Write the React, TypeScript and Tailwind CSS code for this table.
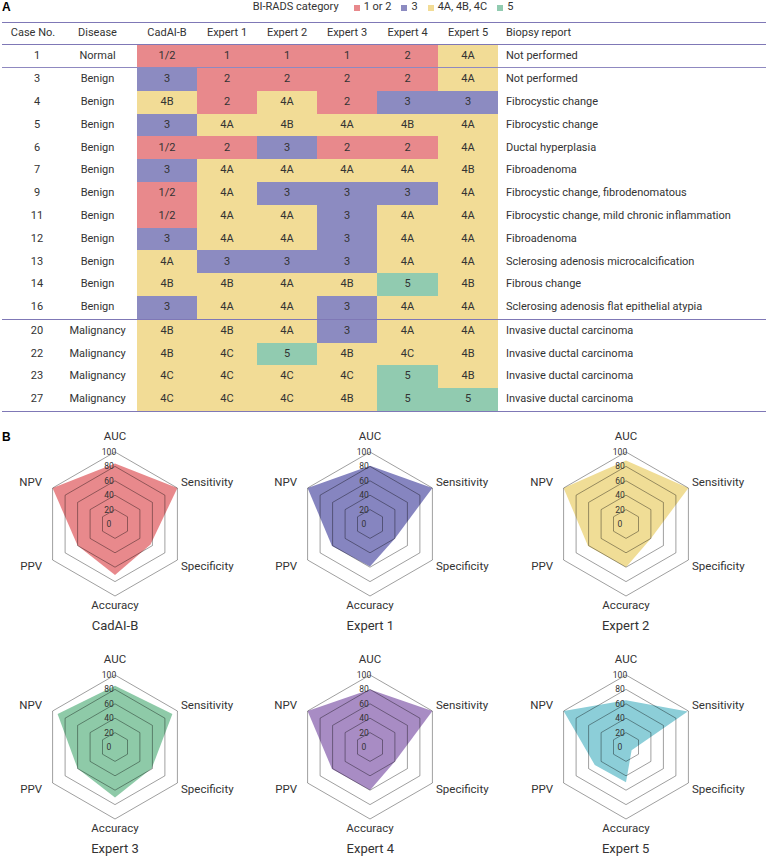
import React from 'react';

type Cat = 'p' | 'b' | 'y' | 'g';

const cellBg: Record<Cat, string> = {
  p: 'bg-[#e8898c]',
  b: 'bg-[#8c8bc1]',
  y: 'bg-[#f2dc96]',
  g: 'bg-[#91cbb0]',
};

const catOf = (v: string): Cat => {
  if (v === '3') return 'b';
  if (v === '5') return 'g';
  if (v.startsWith('4')) return 'y';
  return 'p';
};

type Row = [string, string, string[], string];

const normal: Row[] = [['1', 'Normal', ['1/2', '1', '1', '1', '2', '4A'], 'Not performed']];

const benign: Row[] = [
  ['3', 'Benign', ['3', '2', '2', '2', '2', '4A'], 'Not performed'],
  ['4', 'Benign', ['4B', '2', '4A', '2', '3', '3'], 'Fibrocystic change'],
  ['5', 'Benign', ['3', '4A', '4B', '4A', '4B', '4A'], 'Fibrocystic change'],
  ['6', 'Benign', ['1/2', '2', '3', '2', '2', '4A'], 'Ductal hyperplasia'],
  ['7', 'Benign', ['3', '4A', '4A', '4A', '4A', '4B'], 'Fibroadenoma'],
  ['9', 'Benign', ['1/2', '4A', '3', '3', '3', '4A'], 'Fibrocystic change, fibrodenomatous'],
  ['11', 'Benign', ['1/2', '4A', '4A', '3', '4A', '4A'], 'Fibrocystic change, mild chronic inflammation'],
  ['12', 'Benign', ['3', '4A', '4A', '3', '4A', '4A'], 'Fibroadenoma'],
  ['13', 'Benign', ['4A', '3', '3', '3', '4A', '4A'], 'Sclerosing adenosis microcalcification'],
  ['14', 'Benign', ['4B', '4B', '4A', '4B', '5', '4B'], 'Fibrous change'],
  ['16', 'Benign', ['3', '4A', '4A', '3', '4A', '4A'], 'Sclerosing adenosis flat epithelial atypia'],
];

const malignant: Row[] = [
  ['20', 'Malignancy', ['4B', '4B', '4A', '3', '4A', '4A'], 'Invasive ductal carcinoma'],
  ['22', 'Malignancy', ['4B', '4C', '5', '4B', '4C', '4B'], 'Invasive ductal carcinoma'],
  ['23', 'Malignancy', ['4C', '4C', '4C', '4C', '5', '4B'], 'Invasive ductal carcinoma'],
  ['27', 'Malignancy', ['4C', '4C', '4C', '4B', '5', '5'], 'Invasive ductal carcinoma'],
];

const cols = 'grid grid-cols-[62px_73px_60px_60px_60px_60px_61px_60px_1fr]';

const TableRow = ({ row, h }: { row: Row; h: string }) => (
  <div className={`${cols} ${h}`}>
    <div className="flex items-center justify-center pl-2">{row[0]}</div>
    <div className="flex items-center justify-center whitespace-nowrap pr-[6px]">{row[1]}</div>
    {row[2].map((v, i) => (
      <div key={i} className={`flex items-center justify-center ${cellBg[catOf(v)]}`}>
        {v}
      </div>
    ))}
    <div className="flex items-center pl-2 whitespace-nowrap">{row[3]}</div>
  </div>
);

const LegendItem = ({ c, label }: { c: Cat; label: string }) => (
  <div className="flex items-center gap-[4px]">
    <span className={`w-[6px] h-[6px] ${cellBg[c]}`} />
    <span>{label}</span>
  </div>
);

// radar axes: AUC, Sensitivity, Specificity, Accuracy, PPV, NPV
const angles = [-90, -30, 30, 90, 150, 210].map((a) => (a * Math.PI) / 180);

const Radar = ({ values, color, title }: { values: number[]; color: string; title: string }) => {
  const cx = 115;
  const cy = 97;
  const R = 72;
  const pts = (rs: number[]) =>
    rs.map((r, i) => `${(cx + r * Math.cos(angles[i])).toFixed(1)},${(cy + r * Math.sin(angles[i])).toFixed(1)}`).join(' ');
  const ring = (v: number) => pts(angles.map(() => (v / 100) * R));
  return (
    <div className="flex flex-col">
      <svg width="257" height="190" className="block">
        <polygon points={pts(values.map((v) => (v / 100) * R))} fill={color} />
        {[20, 40, 60, 80, 100].map((v) => (
          <polygon key={v} points={ring(v)} fill="none" stroke="#000" strokeOpacity={0.42} strokeWidth={0.9} />
        ))}
        {[0, 20, 40, 60, 80, 100].map((v) => (
          <text key={v} x={cx - 6} y={cy - (v / 100) * R} fontSize="8.5" textAnchor="middle" dominantBaseline="central" fill="#333">
            {v}
          </text>
        ))}
        <g fontSize="11.5" fill="#333">
          <text x={cx} y={9} textAnchor="middle" dominantBaseline="central">AUC</text>
          <text x={cx + 66} y={cy - 42} dominantBaseline="central">Sensitivity</text>
          <text x={cx + 66} y={cy + 42} dominantBaseline="central">Specificity</text>
          <text x={cx} y={cy + 81} textAnchor="middle" dominantBaseline="central">Accuracy</text>
          <text x={cx - 73} y={cy - 42} textAnchor="end" dominantBaseline="central">NPV</text>
          <text x={cx - 73} y={cy + 42} textAnchor="end" dominantBaseline="central">PPV</text>
        </g>
      </svg>
      <div className="w-[230px] h-[18px] leading-[18px] text-center text-[13px] text-[#333]">{title}</div>
    </div>
  );
};

const charts = [
  { title: 'CadAI-B', color: '#e8898c', values: [84, 100, 57, 71, 60, 100] },
  { title: 'Expert 1', color: '#8685c0', values: [81, 100, 40, 59, 61, 100] },
  { title: 'Expert 2', color: '#f0dd96', values: [88, 100, 40, 60, 61, 100] },
  { title: 'Expert 3', color: '#8ecaa8', values: [85, 92, 59, 70, 60, 92] },
  { title: 'Expert 4', color: '#a88cc4', values: [80, 100, 40, 60, 61, 100] },
  { title: 'Expert 5', color: '#8cced8', values: [65, 99, 9, 49, 50, 100] },
];

export default function App() {
  return (
    <div className="w-[766px] h-[858px] bg-white overflow-hidden text-[11px] text-[#333] font-['Roboto',sans-serif]">
      <div className="grid grid-cols-[1fr_auto_1fr] h-[22px] items-start">
        <div className="font-['Liberation_Sans',sans-serif] font-bold text-[12px] text-black pl-[2px] leading-[14px]">A</div>
        <div className="flex items-center gap-[10px] h-[14px] pt-[1px]">
          <span className="mr-[5px]">BI-RADS category</span>
          <LegendItem c="p" label="1 or 2" />
          <LegendItem c="b" label="3" />
          <LegendItem c="y" label="4A, 4B, 4C" />
          <LegendItem c="g" label="5" />
        </div>
        <div />
      </div>

      <div className="ml-[2px] border-t border-b border-[#7f78b6]">
        <div className={`${cols} h-[22px] border-b border-[#7f78b6]`}>
          <div className="flex items-center justify-center">Case No.</div>
          <div className="flex items-center justify-center pr-[6px]">Disease</div>
          {['CadAI-B', 'Expert 1', 'Expert 2', 'Expert 3', 'Expert 4', 'Expert 5'].map((h) => (
            <div key={h} className="flex items-center justify-center">{h}</div>
          ))}
          <div className="flex items-center pl-2">Biopsy report</div>
        </div>
        <div className="border-b border-[#8f89c0]">
          {normal.map((r) => <TableRow key={r[0]} row={r} h="h-[22px]" />)}
        </div>
        <div className="border-b border-[#7f78b6]">
          {benign.map((r) => <TableRow key={r[0]} row={r} h="h-[22.8px]" />)}
        </div>
        <div>
          {malignant.map((r) => <TableRow key={r[0]} row={r} h="h-[22.75px]" />)}
        </div>
      </div>

      <div className="relative mt-[15px]">
        <div className="absolute left-[2px] top-[3px] font-['Liberation_Sans',sans-serif] font-bold text-[12px] text-black leading-[14px]">B</div>
        <div className="grid grid-cols-3 gap-y-[15px]">
          {charts.map((c) => (
            <Radar key={c.title} {...c} />
          ))}
        </div>
      </div>
    </div>
  );
}
